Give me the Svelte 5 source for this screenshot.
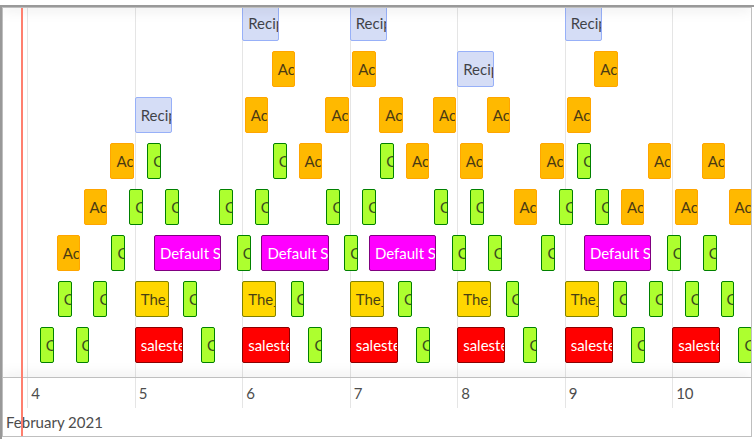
<script>
  const HOURS = 167; // visible span
  const ORIGIN = 5.4; // hours shown before midnight of the 4th

  const left = (hour) => `${((hour + ORIGIN) / HOURS) * 100}%`;
  const width = (hours) => `${(hours / HOURS) * 100}%`;

  const kinds = {
    recipe: { label: 'Recip', hours: 8.25 },
    account: { label: 'Ac', hours: 5.2 },
    contact: { label: 'C', hours: 3.1 },
    fallback: { label: 'Default S', hours: 15 },
    theme: { label: 'The_', hours: 7.6 },
    sales: { label: 'saleste', hours: 10.75 }
  };

  const rows = [
    { recipe: [48, 72, 120] },
    { account: [54.6, 72.6, 126.6], recipe: [96] },
    { recipe: [24], account: [48.6, 66.6, 78.6, 90.6, 102.6, 120.6] },
    { account: [18.6, 60.6, 84.6, 96.6, 114.6, 138.6, 150.6], contact: [26.8, 54.8, 78.8, 122.8] },
    {
      account: [12.6, 108.6, 132.6, 144.6, 156.6],
      contact: [22.8, 30.8, 42.8, 50.8, 66.8, 74.8, 90.8, 98.8, 118.8, 126.8]
    },
    {
      account: [6.6],
      contact: [18.8, 46.8, 70.8, 94.8, 102.8, 114.8, 142.8, 150.8],
      fallback: [28.3, 52.3, 76.3, 124.3]
    },
    {
      contact: [6.8, 14.8, 34.8, 58.8, 82.8, 106.8, 130.8, 138.8, 146.8, 154.8],
      theme: [24, 48, 72, 96, 120]
    },
    {
      contact: [2.8, 10.8, 38.8, 62.8, 86.8, 110.8, 134.8, 158.8],
      sales: [24, 48, 72, 96, 120, 144]
    }
  ].map((row) =>
    Object.entries(row).flatMap(([kind, starts]) => starts.map((start) => ({ kind, start })))
  );

  const days = [4, 5, 6, 7, 8, 9, 10];
</script>

<main class="frame">
  <section class="timeline" aria-label="Job timeline">
    <div class="grid" aria-hidden="true">
      {#each days as day}
        <span class="line" style:left={left((day - 4) * 24)}></span>
      {/each}
    </div>
    <div class="center">
      <div class="rows">
        {#each rows as row}
          <div class="row">
            {#each row as item}
              <div
                class="item {item.kind}"
                style:left={left(item.start)}
                style:width={width(kinds[item.kind].hours)}
              >
                <span class="content">{kinds[item.kind].label}</span>
              </div>
            {/each}
          </div>
        {/each}
      </div>
      <div class="shadow top"></div>
      <div class="shadow bottom"></div>
    </div>
    <footer class="axis">
      <div class="minor">
        {#each days as day}
          <span class="day" style:left={left((day - 4) * 24)}>{day}</span>
        {/each}
      </div>
      <div class="major">February 2021</div>
    </footer>
    <div class="now" style:left={left(-1.4)}></div>
  </section>
</main>

<style>
  :global(body) {
    background: #fff;
    overflow: hidden;
  }
  .frame {
    box-sizing: border-box;
    margin-top: 5px;
    min-height: calc(100vh - 5px);
    padding-right: 2px;
    border-top: 2px solid #999;
    border-left: 2px solid #999;
    font-family: Lato, 'Open Sans', sans-serif;
    font-size: 15px;
    line-height: 24px;
    color: #1a1a1a;
  }
  .timeline {
    position: relative;
    border: 1px solid #bfbfbf;
    overflow: hidden;
  }
  .grid {
    position: absolute;
    inset: 0 0 28px;
  }
  .line {
    position: absolute;
    top: 0;
    bottom: 0;
    border-left: 1px solid #e5e5e5;
  }
  .center {
    position: relative;
    overflow: hidden;
    border-bottom: 1px solid #bfbfbf;
  }
  .rows {
    display: flex;
    flex-direction: column;
    gap: 10px;
    margin-top: -3px;
    padding-bottom: 14px;
  }
  .row {
    position: relative;
    height: 36px;
  }
  .item {
    position: absolute;
    box-sizing: border-box;
    height: 36px;
    padding: 5px 0 5px 5px;
    border: 1px solid;
    border-radius: 2px;
    overflow: hidden;
    white-space: nowrap;
  }
  .content {
    display: block;
    opacity: 0.8;
  }
  .recipe {
    background: #d5ddf6;
    border-color: #97b0f8;
  }
  .account {
    background: #ffb900;
    border-color: orange;
  }
  .contact {
    background: #adff2f;
    border-color: green;
  }
  .fallback {
    background: #f0f;
    border-color: purple;
    color: #fff;
  }
  .theme {
    background: gold;
    border-color: olive;
  }
  .sales {
    background: red;
    border-color: #8b0000;
    color: #fff;
  }
  .fallback .content,
  .sales .content {
    opacity: 1;
  }
  .shadow {
    position: absolute;
    left: 0;
    width: 100%;
    height: 1px;
    box-shadow: 0 0 12px rgba(0, 0, 0, 0.5);
  }
  .top {
    top: -1px;
  }
  .bottom {
    bottom: -1px;
  }
  .axis {
    color: #4d4d4d;
  }
  .minor {
    position: relative;
    height: 30px;
  }
  .day {
    position: absolute;
    padding: 3px 4px;
  }
  .major {
    padding: 2px 3px;
  }
  .now {
    position: absolute;
    top: 0;
    bottom: 0;
    width: 2px;
    background: #ff7f6e;
  }
</style>
